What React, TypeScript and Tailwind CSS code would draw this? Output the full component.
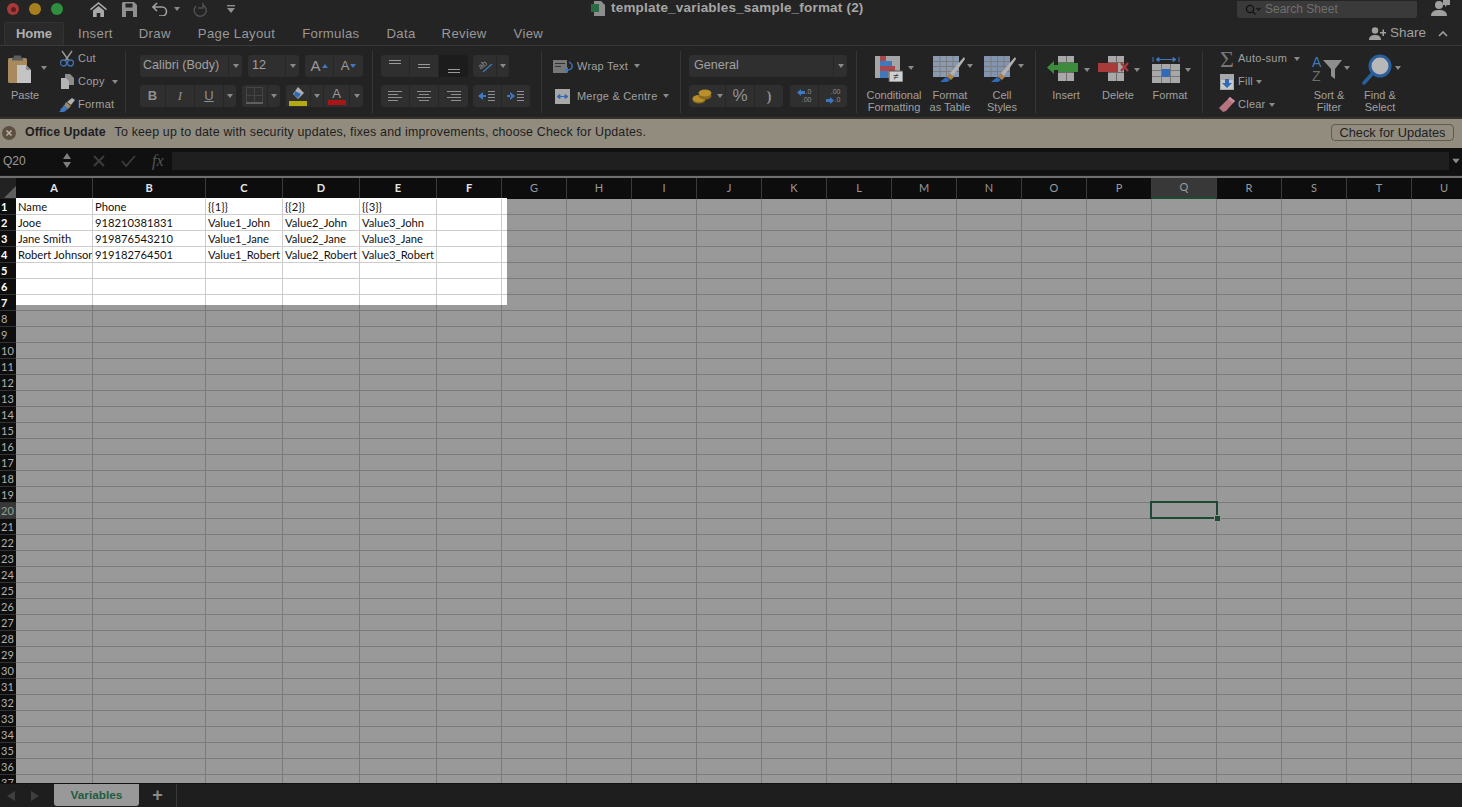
import type { ReactNode } from 'react';

const COLS = ['A', 'B', 'C', 'D', 'E', 'F', 'G', 'H', 'I', 'J', 'K', 'L', 'M', 'N', 'O', 'P', 'Q', 'R', 'S', 'T', 'U'];
const COL_W = [77, 113, 77, 77, 77, 65, 65, 65, 65, 65, 65, 65, 65, 65, 65, 65, 65, 65, 65, 65, 65];
const ROWS = Array.from({ length: 37 }, (_, i) => i + 1);

const DATA: string[][] = [
  ['Name', 'Phone', '{{1}}', '{{2}}', '{{3}}'],
  ['Jooe', '918210381831', 'Value1_John', 'Value2_John', 'Value3_John'],
  ['Jane Smith', '919876543210', 'Value1_Jane', 'Value2_Jane', 'Value3_Jane'],
  ['Robert Johnson', '919182764501', 'Value1_Robert', 'Value2_Robert', 'Value3_Robert'],
];

const Caret = ({ className = '' }: { className?: string }) => (
  <svg width="6" height="4" viewBox="0 0 6 4" className={`shrink-0 ${className}`}>
    <path d="M0 0h6L3 4z" fill="#8a8a8a" />
  </svg>
);

const Sep = () => <div className="w-px h-[62px] mt-[5px] bg-[#363636] shrink-0" />;

// bouton du ruban, une cellule dans un groupe gris
const Cell = ({ w, children, dark }: { w: number; children: ReactNode; dark?: boolean }) => (
  <div
    className={`h-full flex items-center justify-center border-r border-[#262626] last:border-r-0 ${dark ? 'bg-[#1c1c1c]' : ''}`}
    style={{ width: w }}
  >
    {children}
  </div>
);

const Group = ({ w, children }: { w: number; children: ReactNode }) => (
  <div className="h-[22px] flex bg-[#2f2f2f] rounded-[3px] overflow-hidden shrink-0" style={{ width: w }}>
    {children}
  </div>
);

const SmallAction = ({ icon, label, caret, tight }: { icon: ReactNode; label: string; caret?: boolean; tight?: boolean }) => (
  <div className="h-[23px] flex items-center">
    <div className="w-[20px] flex justify-center shrink-0">{icon}</div>
    <span className="ml-[1px] text-[11px] text-[#a0a0a0] tracking-[0.25px]">{label}</span>
    {caret && <Caret className={tight ? 'ml-[3px]' : 'ml-[7px]'} />}
  </div>
);

const Big = ({ w, icon, label, second }: { w: number; icon: ReactNode; label: string; second?: string }) => (
  <div className="flex flex-col items-center shrink-0" style={{ width: w }}>
    <div className="h-[34px] flex items-center">{icon}</div>
    <div className="mt-[3px] text-[11px] leading-[12px] text-[#a0a0a0] text-center whitespace-nowrap">
      {label}
      {second && <br />}
      {second}
    </div>
  </div>
);

const AlignLines = ({ type }: { type: 'l' | 'c' | 'r' }) => {
  const x = (w: number) => (type === 'l' ? 0 : type === 'c' ? (14 - w) / 2 : 14 - w);
  return (
    <svg width="14" height="11" viewBox="0 0 14 11">
      {[[14, 0], [10, 3], [14, 6], [10, 9]].map(([w, y]) => (
        <rect key={y} x={x(w)} y={y} width={w} height="1" fill="#8f8f8f" />
      ))}
    </svg>
  );
};

const VAlign = ({ y }: { y: number }) => (
  <svg width="14" height="14" viewBox="0 0 14 14">
    <rect x="1" y={y} width="12" height="1" fill="#9a9a9a" />
    <rect x="1" y={y + 3} width="12" height="1" fill="#9a9a9a" />
  </svg>
);

const Indent = ({ flip }: { flip?: boolean }) => (
  <svg width="18" height="12" viewBox="0 0 18 12">
    <path d={flip ? 'M3 2v8l5-4zM0 5h4v2H0z' : 'M5 2v8L0 6zM4 5h4v2H4z'} fill="#3f78bd" />
    {[1, 4, 7, 10].map(y => (
      <rect key={y} x="10" y={y} width="7" height="1" fill="#8f8f8f" />
    ))}
  </svg>
);

const PasteIcon = () => (
  <svg width="24" height="30" viewBox="0 0 24 30">
    <rect x="0" y="4" width="19" height="25" rx="1.5" fill="#a98a5c" />
    <path d="M6 1.5h7v2h2v3H4v-3h2z" fill="#5d5d5d" />
    <path d="M9 11h9l5 5v13H9z" fill="#c4c4c4" />
    <path d="M18 11v5h5z" fill="#8b8b8b" />
  </svg>
);

const CutIcon = () => (
  <svg width="16" height="17" viewBox="0 0 16 17" fill="none">
    <path d="M3 1l7 10M13 1L6 11" stroke="#9a9a9a" strokeWidth="1.4" />
    <circle cx="4.5" cy="13" r="3" stroke="#3f6fae" strokeWidth="1.3" />
    <circle cx="11.5" cy="13" r="3" stroke="#3f6fae" strokeWidth="1.3" />
  </svg>
);

const CopyIcon = () => (
  <svg width="13" height="15" viewBox="0 0 13 15">
    <path d="M4 0h5l4 4v7H4z" fill="#8c8c8c" />
    <path d="M0 4h5l3 3v8H0z" fill="#b4b4b4" />
  </svg>
);

const BrushIcon = () => (
  <svg width="16" height="14" viewBox="0 0 16 14">
    <path d="M8 4l5-4 3 2-4 5z" fill="#b0b0b0" />
    <path d="M7 4l5 4-3 3-4-3z" fill="#9a8a6a" />
    <path d="M5 7l4 4-4 3H0l2-2-1-1 2-1z" fill="#3f78bd" />
  </svg>
);

const TableFill = ({ tint }: { tint: string }) => (
  <svg width="32" height="30" viewBox="0 0 32 30">
    <rect x="0" y="2" width="26" height="21" fill={tint} />
    {[6.5, 13, 19.5].map(x => (
      <rect key={x} x={x} y="2" width="1" height="21" fill="#7d7d7d" />
    ))}
    {[7, 12, 17].map(y => (
      <rect key={y} x="0" y={y} width="26" height="1" fill="#7d7d7d" />
    ))}
    <path d="M31 3L17 19l3 3L32 5z" fill="#b2b2b2" />
    <path d="M16 19l5 4-3 3-4-3z" fill="#a8834f" />
    <path d="M13 23l4 3-3 2H7z" fill="#2f6bb8" />
  </svg>
);

const CondIcon = () => (
  <svg width="28" height="26" viewBox="0 0 28 26">
    <rect width="25" height="22" fill="#a5a5a5" />
    <rect x="5" y="0" width="6" height="5" fill="#a8484c" />
    <rect x="5" y="5" width="12" height="5" fill="#3f78bd" />
    <rect x="5" y="10" width="15" height="5" fill="#a8484c" />
    <rect x="5" y="15" width="8" height="7" fill="#3f78bd" />
    <rect x="14" y="15" width="14" height="11" fill="#cfcfcf" stroke="#555" />
    <text x="21" y="24" fontSize="10" textAnchor="middle" fill="#333" fontFamily="Liberation Sans, sans-serif">≠</text>
  </svg>
);

const RowColIcon = ({ color, left, cross }: { color: string; left?: boolean; cross?: boolean }) => (
  <svg width="33" height="26" viewBox="0 0 33 26">
    <rect x="11" y="0" width="16" height="25" fill="#a8a8a8" />
    <rect x="19" y="0" width="1" height="25" fill="#6b6b6b" />
    <rect x="11" y="6" width="16" height="1" fill="#6b6b6b" />
    <rect x="11" y="16" width="16" height="1" fill="#6b6b6b" />
    <rect x={left ? 11 : 1} y="7" width="20" height="9" fill={color} />
    {left && <path d="M0 11.5L7 5v4h5v5H7v4z" fill={color} />}
    {cross && <path d="M24 7l7 8M31 7l-7 8" stroke={color} strokeWidth="2.4" />}
  </svg>
);

const FormatIcon = () => (
  <svg width="28" height="27" viewBox="0 0 28 27">
    <path d="M1 1v5M27 1v5M4 3.5h20M4 3.5l3-2v4zM24 3.5l-3-2v4z" stroke="#3f78bd" fill="#3f78bd" strokeWidth="1" />
    <rect y="8" width="28" height="19" fill="#a8a8a8" />
    <rect x="9" y="8" width="1" height="19" fill="#777" />
    <rect x="18" y="8" width="1" height="19" fill="#777" />
    <rect y="14" width="28" height="1" fill="#777" />
    <rect y="20" width="28" height="1" fill="#777" />
    <rect x="10" y="13" width="8" height="8" fill="#2f6bb8" />
  </svg>
);

const SortIcon = () => (
  <svg width="31" height="30" viewBox="0 0 31 30" fontFamily="Liberation Sans, sans-serif">
    <text x="1" y="13" fontSize="14" fill="#3f78bd">A</text>
    <text x="1" y="27" fontSize="14" fill="#6d6d6d">Z</text>
    <path d="M12 6h19l-7 9v10l-4-3v-7z" fill="#8e8e8e" />
  </svg>
);

const FindIcon = () => (
  <svg width="30" height="31" viewBox="0 0 30 31" fill="none">
    <circle cx="18" cy="12" r="10" fill="#b8b8b8" stroke="#2a5f9e" strokeWidth="3" />
    <path d="M10 20L2 29" stroke="#2a5f9e" strokeWidth="3.5" strokeLinecap="round" />
  </svg>
);

const FillIcon = () => (
  <svg width="14" height="16" viewBox="0 0 14 16">
    <rect width="14" height="16" fill="#a8a8a8" />
    <rect x="1" y="6" width="12" height="9" fill="#c8c8c8" />
    <path d="M5 5h4v4h3l-5 5-5-5h3z" fill="#2f6bb8" />
  </svg>
);

const EraserIcon = () => (
  <svg width="16" height="15" viewBox="0 0 16 15">
    <path d="M11 0l5 4-9 10-3 1-4-4z" fill="#b5727f" />
    <path d="M11 0l5 4-2 2-5-4z" fill="#c98c98" />
  </svg>
);

const Coins = () => (
  <svg width="20" height="15" viewBox="0 0 20 15">
    <ellipse cx="7" cy="11" rx="6.5" ry="3.5" fill="#8b6a1f" />
    <ellipse cx="7" cy="9.5" rx="6.5" ry="3.5" fill="#b98f2b" />
    <ellipse cx="13" cy="7" rx="6.5" ry="3.5" fill="#8b6a1f" />
    <ellipse cx="13" cy="4" rx="6.5" ry="3.5" fill="#b98f2b" />
  </svg>
);

const WrapIcon = () => (
  <svg width="21" height="13" viewBox="0 0 21 13">
    <rect width="14" height="13" fill="#777" />
    <rect x="2" y="3" width="10" height="1" fill="#333" />
    <rect x="2" y="6" width="6" height="1" fill="#333" />
    <path d="M16 2c5 3 4 8-2 8" stroke="#3f78bd" strokeWidth="1.4" fill="none" />
    <path d="M15 7v6l-4-3z" fill="#3f78bd" />
  </svg>
);

const MergeIcon = () => (
  <svg width="15" height="15" viewBox="0 0 15 15">
    <rect width="15" height="15" fill="#a8a8a8" />
    <path d="M2 7.5h11M2 7.5l3-2v4zM13 7.5l-3-2v4z" stroke="#2f6bb8" fill="#2f6bb8" />
  </svg>
);

const DecArrow = ({ flip }: { flip?: boolean }) => (
  <svg width="8" height="7" viewBox="0 0 8 7" className="inline-block mr-[1px]">
    <path d={flip ? 'M0 2h4V0l4 3.5L4 7V5H0z' : 'M8 2H4V0L0 3.5 4 7V5h4z'} fill="#3f78bd" />
  </svg>
);

export default function App() {
  return (
    <div className="h-screen w-full flex flex-col overflow-hidden bg-[#242424] font-['Liberation_Sans',sans-serif] text-[#a0a0a0]">
      {/* Barre de titre */}
      <div className="h-[18px] flex items-center shrink-0 relative">
        <div className="flex items-center pl-[7px] gap-[10px]">
          <span className="w-[12px] h-[12px] rounded-full bg-[#a83a3a] flex items-center justify-center">
            <span className="w-[5px] h-[5px] rounded-full bg-[#5d1f1f]" />
          </span>
          <span className="w-[12px] h-[12px] rounded-full bg-[#a6801f]" />
          <span className="w-[12px] h-[12px] rounded-full bg-[#2f8f3c]" />
        </div>
        <svg width="17" height="15" viewBox="0 0 17 15" className="ml-[27px]">
          <path d="M8.5 0L17 7l-1 1.2L8.5 2 1 8.2 0 7zM3 8.5l5.5-4.6L14 8.5V15h-3.7v-4H6.7v4H3z" fill="#a8a8a8" />
        </svg>
        <svg width="15" height="15" viewBox="0 0 15 15" className="ml-[15px]">
          <path d="M1 0h11l3 3v12H0V1z" fill="#8f8f8f" />
          <rect x="3.5" y="1.5" width="7" height="4" fill="#242424" />
          <rect x="4" y="9" width="7" height="6" fill="#242424" />
        </svg>
        <svg width="16" height="14" viewBox="0 0 16 14" fill="none" className="ml-[15px]">
          <path d="M5 1L1 5l4 4M1 5h9a4.5 4.5 0 010 9H7" stroke="#a0a0a0" strokeWidth="1.6" />
        </svg>
        <Caret className="ml-[6px]" />
        <svg width="14" height="15" viewBox="0 0 14 15" fill="none" className="ml-[13px]">
          <path d="M10 1v5H5M10 3a6 6 0 11-7 1" stroke="#4f4f4f" strokeWidth="1.5" />
        </svg>
        <svg width="8" height="8" viewBox="0 0 8 8" className="ml-[20px]">
          <rect width="8" height="1.4" fill="#909090" />
          <path d="M0 3h8L4 8z" fill="#909090" />
        </svg>
        <div className="absolute left-[591px] top-0 h-[17px] flex items-center">
          <svg width="14" height="15" viewBox="0 0 14 15">
            <path d="M3 0h7l4 4v11H3z" fill="#8d8d8d" />
            <rect y="3" width="8" height="8" fill="#2a6b45" />
          </svg>
          <span className="ml-[6px] text-[13.5px] tracking-[0.2px] font-bold text-[#a6a6a6]">template_variables_sample_format (2)</span>
        </div>
        <div className="ml-auto mr-[45px] w-[180px] h-[17px] bg-[#3a3a3a] rounded-b-[3px] flex items-center pl-[8px]">
          <svg width="16" height="11" viewBox="0 0 16 11" fill="none">
            <circle cx="5" cy="5" r="3.6" stroke="#111" strokeWidth="1.2" />
            <path d="M8 8l2.5 2.5M11.5 4l2 2 2-2" stroke="#111" strokeWidth="1.1" />
          </svg>
          <span className="ml-[4px] text-[12px] text-[#6f6f6f]">Search Sheet</span>
        </div>
        <svg width="20" height="18" viewBox="0 0 20 18" className="absolute right-[11px] top-0">
          <circle cx="8" cy="5" r="4" fill="#a0a0a0" />
          <path d="M0 16c0-5 4-6 8-6s8 1 8 6z" fill="#a0a0a0" />
          <path d="M12 0h7v5h-3l-2 2V5h-2z" fill="#a0a0a0" />
        </svg>
      </div>

      {/* Onglets */}
      <div className="h-[28px] flex items-end shrink-0 border-b border-[#3a3a3a] relative">
        <div className="ml-[4px] w-[60px] h-[23px] bg-[#2a2a2a] rounded-t-[3px] border border-b-0 border-[#333] flex items-center justify-center font-bold text-[#b0b0b0] text-[13px]">
          Home
        </div>
        <div className="flex items-center h-[23px] text-[#989898] text-[13.2px] tracking-[0.3px]">
          <span className="ml-[14px]">Insert</span>
          <span className="ml-[26px]">Draw</span>
          <span className="ml-[27px]">Page Layout</span>
          <span className="ml-[27px]">Formulas</span>
          <span className="ml-[27px]">Data</span>
          <span className="ml-[26px]">Review</span>
          <span className="ml-[27px]">View</span>
        </div>
        <div className="ml-auto mr-[14px] h-[23px] flex items-center text-[#a0a0a0]">
          <svg width="17" height="13" viewBox="0 0 17 13">
            <circle cx="6" cy="3.5" r="3.2" fill="#a0a0a0" />
            <path d="M0 13c0-4 3-5 6-5s6 1 6 5zM11 5h2.5V2.5H15V5h2v1.5h-2V9h-1.5V6.5H11z" fill="#a0a0a0" />
          </svg>
          <span className="ml-[4px] text-[13.5px]">Share</span>
          <svg width="10" height="6" viewBox="0 0 10 6" fill="none" className="ml-[12px]">
            <path d="M1 5l4-4 4 4" stroke="#a0a0a0" strokeWidth="1.6" />
          </svg>
        </div>
      </div>

      {/* Ruban */}
      <div className="h-[71px] flex shrink-0 bg-[#232323]">
        <div className="w-[125px] flex shrink-0">
          <div className="w-[49px] pl-[8px] pt-[8px] shrink-0">
            <div className="flex items-center">
              <PasteIcon />
              <Caret className="ml-[9px] -mt-[2px]" />
            </div>
            <div className="mt-[3px] ml-[3px] text-[11px] text-[#a0a0a0]">Paste</div>
          </div>
          <div className="pt-[1px] ml-[8px]">
            <SmallAction icon={<CutIcon />} label="Cut" />
            <SmallAction icon={<CopyIcon />} label="Copy" caret />
            <SmallAction icon={<BrushIcon />} label="Format" />
          </div>
        </div>
        <Sep />

        {/* Police */}
        <div className="ml-[14px] w-[223px] pt-[9px] flex flex-col gap-[8px] shrink-0">
          <div className="flex gap-[6px]">
            <Group w={102}>
              <div className="flex-1 flex items-center pl-[3px] pb-[1px] text-[12.6px] text-[#a0a0a0]">Calibri (Body)</div>
              <div className="w-[14px] flex items-center justify-center border-l border-[#262626]"><Caret /></div>
            </Group>
            <Group w={51}>
              <div className="flex-1 flex items-center pl-[4px] pb-[1px] text-[12.6px] text-[#a0a0a0]">12</div>
              <div className="w-[14px] flex items-center justify-center border-l border-[#262626]"><Caret /></div>
            </Group>
            <Group w={58}>
              <Cell w={29}><span className="text-[15px] text-[#9a9a9a]">A</span><span className="ml-[1px] w-0 h-0 border-x-[3px] border-x-transparent border-b-[4px] border-b-[#3f78bd]" /></Cell>
              <Cell w={29}><span className="text-[13px] text-[#9a9a9a]">A</span><span className="ml-[1px] w-0 h-0 border-x-[3px] border-x-transparent border-t-[4px] border-t-[#3f78bd]" /></Cell>
            </Group>
          </div>
          <div className="flex gap-[6px]">
            <Group w={96}>
              <Cell w={26}><span className="text-[13px] font-bold text-[#8f8f8f]">B</span></Cell>
              <Cell w={29}><span className="text-[13px] italic font-['Liberation_Serif',serif] text-[#8f8f8f]">I</span></Cell>
              <Cell w={29}><span className="text-[13px] underline text-[#8f8f8f]">U</span></Cell>
              <Cell w={12}><Caret /></Cell>
            </Group>
            <Group w={38}>
              <Cell w={26}>
                <svg width="17" height="18" viewBox="0 0 17 18" fill="none">
                  <path d="M.5.5h16v16H.5zM8.5 0v17M0 8.5h17" stroke="#444" />
                  <rect y="15" width="17" height="2" fill="#5f5f5f" />
                </svg>
              </Cell>
              <Cell w={12}><Caret /></Cell>
            </Group>
            <Group w={77}>
              <Cell w={25}>
                <svg width="18" height="19" viewBox="0 0 18 19">
                  <path d="M9 0l6 6-6 6-5-5z" fill="#b0b0b0" />
                  <path d="M6 4l6 3-3 4-4-3z" fill="#2f6bb8" />
                  <rect y="14" width="18" height="5" fill="#b5a914" />
                </svg>
              </Cell>
              <Cell w={13}><Caret /></Cell>
              <Cell w={26}>
                <div className="flex flex-col items-center">
                  <span className="text-[13px] leading-[13px] text-[#9a9a9a]">A</span>
                  <span className="w-[18px] h-[5px] bg-[#a81616]" />
                </div>
              </Cell>
              <Cell w={13}><Caret /></Cell>
            </Group>
          </div>
        </div>
        <div className="ml-[9px]"><Sep /></div>

        {/* Alignement */}
        <div className="ml-[8px] w-[159px] pt-[9px] flex flex-col gap-[8px] shrink-0">
          <div className="flex gap-[5px]">
            <Group w={87}>
              <Cell w={29}><VAlign y={1} /></Cell>
              <Cell w={29}><VAlign y={5} /></Cell>
              <Cell w={29} dark><VAlign y={10} /></Cell>
            </Group>
            <Group w={36}>
              <Cell w={24}>
                <svg width="20" height="18" viewBox="0 0 20 18" fontFamily="Liberation Sans, sans-serif">
                  <text x="3" y="11" fontSize="8" fill="#8f8f8f" transform="rotate(-40 7 8)">ab</text>
                  <path d="M8 15L17 7" stroke="#3f78bd" strokeWidth="1.3" />
                </svg>
              </Cell>
              <Cell w={12}><Caret /></Cell>
            </Group>
          </div>
          <div className="flex gap-[5px]">
            <Group w={87}>
              <Cell w={29}><AlignLines type="l" /></Cell>
              <Cell w={29}><AlignLines type="c" /></Cell>
              <Cell w={29}><AlignLines type="r" /></Cell>
            </Group>
            <Group w={57}>
              <Cell w={29}><Indent /></Cell>
              <Cell w={28}><Indent flip /></Cell>
            </Group>
          </div>
        </div>
        <div className="ml-[1px]"><Sep /></div>

        {/* Retour à la ligne */}
        <div className="ml-[11px] w-[127px] pt-[9px] flex flex-col gap-[8px] shrink-0 text-[11px] whitespace-nowrap">
          <div className="h-[22px] flex items-center">
            <WrapIcon />
            <span className="ml-[3px] tracking-[0.2px]">Wrap Text</span>
            <Caret className="ml-[6px]" />
          </div>
          <div className="h-[22px] flex items-center">
            <span className="w-[2px]" />
            <MergeIcon />
            <span className="ml-[7px] tracking-[0.2px]">Merge &amp; Centre</span>
            <Caret className="ml-[6px]" />
          </div>
        </div>
        <Sep />

        {/* Nombre */}
        <div className="ml-[8px] w-[158px] pt-[9px] flex flex-col gap-[8px] shrink-0">
          <Group w={158}>
            <div className="flex-1 flex items-center pl-[5px] pb-[1px] text-[12.6px]">General</div>
            <div className="w-[14px] flex items-center justify-center border-l border-[#262626]"><Caret /></div>
          </Group>
          <div className="flex gap-[7px]">
            <Group w={94}>
              <Cell w={37}><Coins /><Caret className="ml-[5px]" /></Cell>
              <Cell w={29}><span className="text-[17px] text-[#8f8f8f]">%</span></Cell>
              <Cell w={28}><span className="text-[14px] font-bold font-['Liberation_Serif',serif] text-[#8f8f8f]">)</span></Cell>
            </Group>
            <Group w={57}>
              <Cell w={29}>
                <div className="text-[7px] leading-[8px] text-[#8f8f8f] text-right"><DecArrow />.0<br />.00</div>
              </Cell>
              <Cell w={28}>
                <div className="text-[7px] leading-[8px] text-[#8f8f8f] text-right">.00<br /><DecArrow flip />.0</div>
              </Cell>
            </Group>
          </div>
        </div>
        <div className="ml-[9px]"><Sep /></div>

        {/* Styles */}
        <div className="ml-[6px] flex pt-[6px] shrink-0">
          <Big w={62} label="Conditional" second="Formatting" icon={<div className="flex items-start"><CondIcon /><Caret className="ml-[5px] mt-[10px]" /></div>} />
          <Big w={50} label="Format" second="as Table" icon={<div className="flex items-start ml-[6px]"><TableFill tint="#8a9ab0" /><Caret className="ml-[2px] mt-[10px]" /></div>} />
          <div className="w-[2px]" />
          <Big w={50} label="Cell" second="Styles" icon={<div className="flex items-start ml-[4px]"><TableFill tint="#8294b0" /><Caret className="ml-[2px] mt-[10px]" /></div>} />
        </div>
        <div className="ml-[8px]"><Sep /></div>

        {/* Cellules */}
        <div className="ml-[4px] flex pt-[6px] shrink-0">
          <Big w={52} label="Insert" icon={<div className="flex items-start ml-[5px]"><RowColIcon color="#3d8b3d" left /><Caret className="ml-[4px] mt-[12px]" /></div>} />
          <Big w={52} label="Delete" icon={<div className="flex items-start ml-[1px]"><RowColIcon color="#a83a3a" cross /><Caret className="ml-[4px] mt-[12px]" /></div>} />
          <Big w={52} label="Format" icon={<div className="flex items-start ml-[3px]"><FormatIcon /><Caret className="ml-[5px] mt-[12px]" /></div>} />
        </div>
        <div className="ml-[6px]"><Sep /></div>

        {/* Edition */}
        <div className="ml-[14px] w-[87px] pt-[1px] shrink-0">
          <SmallAction icon={<span className="text-[24px] leading-[20px] text-[#777] font-['Liberation_Serif',serif]">Σ</span>} label="Auto-sum" caret />
          <SmallAction icon={<FillIcon />} label="Fill" caret tight />
          <SmallAction icon={<EraserIcon />} label="Clear" caret tight />
        </div>
        <div className="flex pt-[6px] shrink-0">
          <Big w={50} label="Sort &" second="Filter" icon={<div className="flex items-start ml-[2px]"><SortIcon /><Caret className="ml-[2px] mt-[12px]" /></div>} />
          <div className="w-[1px]" />
          <Big w={50} label="Find &" second="Select" icon={<div className="flex items-start ml-[2px]"><FindIcon /><Caret className="ml-[3px] mt-[12px]" /></div>} />
        </div>
      </div>

      {/* Bandeau de mise à jour */}
      <div className="h-[31px] pb-[2px] bg-[#918c7e] border-t-2 border-[#33312c] flex items-center shrink-0 text-[#1e1e1e] text-[12.4px]">
        <svg width="14" height="14" viewBox="0 0 14 14" className="ml-[2px]">
          <circle cx="7" cy="7" r="7" fill="#5e4f40" />
          <path d="M4.5 4.5l5 5M9.5 4.5l-5 5" stroke="#b8b2a2" strokeWidth="1.5" />
        </svg>
        <span className="ml-[9px] font-bold">Office Update</span>
        <span className="ml-[9px] tracking-[0.18px]">To keep up to date with security updates, fixes and improvements, choose Check for Updates.</span>
        <div className="ml-auto mr-[8px] w-[123px] h-[17px] border border-[#5f5b50] rounded-[4px] flex items-center justify-center text-[12.8px]">
          Check for Updates
        </div>
      </div>

      {/* Barre de formule */}
      <div className="h-[27px] pb-[2px] bg-[#101010] flex items-center shrink-0 text-[#8a8a8a]">
        <div className="w-[63px] pl-[3px] text-[12px] text-[#9a9a9a]">Q20</div>
        <div className="flex flex-col gap-[3px]">
          <span className="w-0 h-0 border-x-[4px] border-x-transparent border-b-[6px] border-b-[#7f7f7f]" />
          <span className="w-0 h-0 border-x-[4px] border-x-transparent border-t-[6px] border-t-[#7f7f7f]" />
        </div>
        <svg width="12" height="12" viewBox="0 0 12 12" className="ml-[22px]">
          <path d="M1 1l10 10M11 1L1 11" stroke="#3c3c3c" strokeWidth="2" />
        </svg>
        <svg width="15" height="12" viewBox="0 0 15 12" fill="none" className="ml-[16px]">
          <path d="M1 6l4 5 9-10" stroke="#3c3c3c" strokeWidth="1.8" />
        </svg>
        <span className="ml-[16px] text-[16px] italic font-['Liberation_Serif',serif] text-[#555]">fx</span>
        <div className="ml-[8px] flex-1 h-[18px] bg-[#1f1f1f]" />
        <Caret className="ml-[4px] mr-[3px] scale-[1.3]" />
      </div>
      <div className="h-[3px] bg-[#6f6f6f] border-t border-[#1a1a1a] shrink-0" />

      {/* Feuille */}
      <div className="flex-1 min-h-0 overflow-hidden relative bg-[#999999] font-['Lato',sans-serif]">
        <div className="flex h-[21px] bg-[#0d0d0d]">
          <div className="w-[16px] shrink-0 bg-[#222] flex items-end justify-end pb-[1px]">
            <span className="w-0 h-0 border-l-[12px] border-l-transparent border-b-[12px] border-b-[#5f5f5f]" />
          </div>
          {COLS.map((c, i) => (
            <div
              key={c}
              style={{ width: COL_W[i] }}
              className={`shrink-0 flex items-center justify-center pb-[1px] text-[11px] border-r border-[#3a3a3a] ${c === 'Q' ? 'bg-[#383838] border-b-2 border-b-[#1c4a35] text-[#9a9a9a]' : i < 6 ? 'text-[#e6e6e6] font-bold' : 'text-[#9a9a9a]'}`}
            >
              {c}
            </div>
          ))}
        </div>

        {/* zone non assombrie */}
        <div className="absolute left-[16px] top-[20px] w-[491px] h-[107px] bg-white" />

        {ROWS.map(r => (
          <div key={r} className="flex h-[16px] relative">
            <div
              className={`w-[16px] shrink-0 flex items-center pl-[1px] text-[11px] leading-none border-b border-[#333] ${r === 20 ? 'bg-[#383838] text-[#8aa598]' : 'bg-[#0d0d0d]'} ${r <= 7 ? 'text-white font-bold' : r !== 20 ? 'text-[#b0b0b0]' : ''}`}
            >
              {r}
            </div>
            {COLS.map((c, i) => (
              <div
                key={c}
                style={{ width: COL_W[i] }}
                className="shrink-0 border-r border-b border-black/20 pl-[2px] overflow-hidden whitespace-nowrap text-[11.2px] leading-[16px] text-[#111]"
              >
                {DATA[r - 1]?.[i] ?? ''}
              </div>
            ))}
          </div>
        ))}

        {/* cellule active */}
        <div className="absolute left-[1150px] top-[323px] w-[68px] h-[18px] border-2 border-[#1c4a35]">
          <span className="absolute -right-[4px] -bottom-[4px] w-[5px] h-[5px] bg-[#1c4a35] outline outline-1 outline-[#999]" />
        </div>
      </div>

      {/* Onglets de feuille */}
      <div className="h-[24px] bg-[#1e1e1e] border-t border-[#111] flex shrink-0 relative">
        <div className="w-[54px] flex items-center shrink-0">
          <span className="ml-[7px] w-0 h-0 border-y-[5px] border-y-transparent border-r-[8px] border-r-[#3f3f3f]" />
          <span className="ml-[16px] w-0 h-0 border-y-[5px] border-y-transparent border-l-[8px] border-l-[#3f3f3f]" />
        </div>
        <div className="w-[85px] h-[22px] pt-[1px] bg-[#999999] rounded-b-[3px] flex items-center justify-center text-[11.8px] font-bold text-[#1f5c3f]">
          Variables
        </div>
        <div className="w-[38px] border-r border-[#3a3a3a] flex items-center justify-center text-[18px] font-bold text-[#8a8a8a]">+</div>
      </div>
    </div>
  );
}
